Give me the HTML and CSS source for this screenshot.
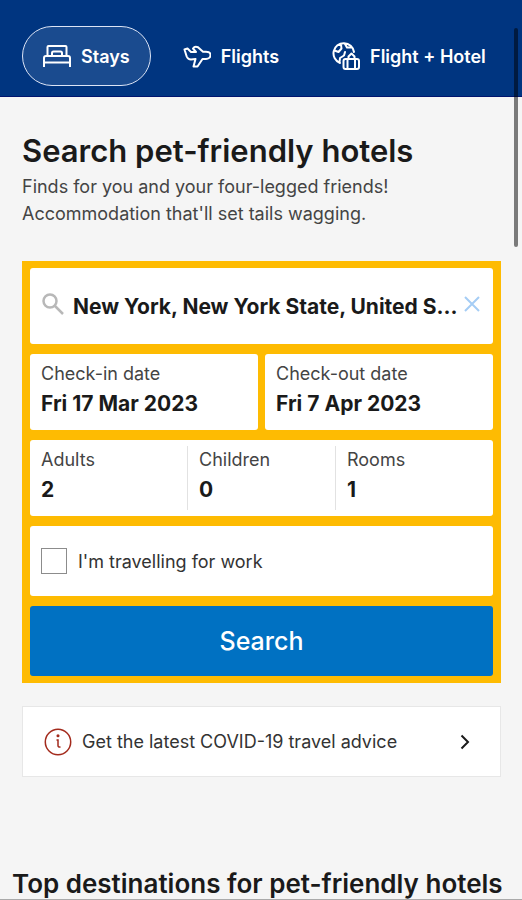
FILE: index.html
```html
<!DOCTYPE html>
<html lang="en-GB">
<head>
<meta charset="utf-8">
<meta name="viewport" content="width=device-width, initial-scale=1">
<title>Search pet-friendly hotels</title>
<link rel="stylesheet" href="styles.css">
</head>
<body>
<header class="header">
  <nav class="tabs">
    <a class="tab tab-active" href="#stays">
      <svg class="icon" viewBox="0 0 28 28" fill="none" stroke="currentColor" stroke-width="2" stroke-linejoin="round"><path d="M4.500 14V5a1 1 0 0 1 1-1h17a1 1 0 0 1 1 1v9M1 25V16a2 2 0 0 1 2-2h22a2 2 0 0 1 2 2v9M1 20.500h26M9 14v-3a1.500 1.500 0 0 1 1.500-1.500h7a1.500 1.500 0 0 1 1.500 1.500v3"/></svg>
      <span>Stays</span>
    </a>
    <a class="tab" href="#flights">
      <svg class="icon" viewBox="0 0 28 28" fill="none" stroke="currentColor" stroke-width="2" stroke-linejoin="round" stroke-linecap="round"><path d="M1.500 7.500L4.500 6.500 8 10h5L10 6.500c1-1.500 3-2 5-1.200l5 4.400h3c2.500 0 4.500 1.300 4.500 3.300 0 2.300-2 4-4.500 4h-3.500l-5 7.500h-4l2-7.500-4.500.5c-2.200 0-3.500-1-4.300-3z"/></svg>
      <span>Flights</span>
    </a>
    <a class="tab" href="#flight-hotel">
      <svg class="icon" viewBox="0 0 28 28" fill="none" stroke="currentColor" stroke-width="2" stroke-linejoin="round" stroke-linecap="round"><path d="M8 21A10.300 10.300 0 1 1 22 10M2.500 8.500l4 1.500 3-3.500-.5-4M13 2l2 3.500h4.500M7.500 20.500l.5-4.500 4-2.500 1-3.500"/><rect x="11.500" y="17" width="15.500" height="10" rx="2"/><path d="M16.500 17v-2.500l3-3 3 3V17M15.500 17v10M23 17v10"/></svg>
      <span>Flight + Hotel</span>
    </a>
  </nav>
</header>
<main class="page">
  <h1 class="title">Search pet-friendly hotels</h1>
  <p class="intro">Finds for you and your four-legged friends!<br>Accommodation that'll set tails wagging.</p>

  <form class="search">
    <div class="box destination">
      <svg class="lens" viewBox="0 0 22 22" fill="none" stroke="currentColor" stroke-width="2.500"><circle cx="8" cy="8" r="6.500"/><path d="M12.500 12.500l8.500 8.500"/></svg>
      <input class="place" type="text" aria-label="Destination" value="New York, New York State, United S...">
      <button class="clear" type="button" aria-label="Clear destination"><svg viewBox="0 0 16 16" fill="none" stroke="currentColor" stroke-width="2"><path d="M1 1l14 14M15 1L1 15"/></svg></button>
    </div>
    <div class="dates">
      <button class="box field" type="button"><span class="label">Check-in date</span><span class="value">Fri 17 Mar 2023</span></button>
      <button class="box field" type="button"><span class="label">Check-out date</span><span class="value">Fri 7 Apr 2023</span></button>
    </div>
    <div class="box guests">
      <button class="field" type="button"><span class="label">Adults</span><span class="value">2</span></button>
      <button class="field" type="button"><span class="label">Children</span><span class="value">0</span></button>
      <button class="field" type="button"><span class="label">Rooms</span><span class="value">1</span></button>
    </div>
    <label class="box work"><input class="check" type="checkbox"><span>I'm travelling for work</span></label>
    <button class="submit" type="submit">Search</button>
  </form>

  <a class="advice" href="#covid">
    <svg class="info" viewBox="0 0 28 28" fill="none" stroke="currentColor" stroke-width="1.500"><circle cx="14" cy="14" r="12.700"/><path d="M12.500 12h1.500v5.500q0 1.800 2.500 1.500"/><circle cx="14" cy="7.800" r=".8" fill="currentColor"/></svg>
    <span class="advice-text">Get the latest COVID-19 travel advice</span>
    <svg class="chevron" viewBox="0 0 10 16" fill="none" stroke="currentColor" stroke-width="2"><path d="M1.500 1.500L8 8l-6.500 6.500"/></svg>
  </a>
</main>
<section class="top">
  <h2 class="top-title">Top destinations for pet-friendly hotels</h2>
</section>
<div class="scroll-thumb"></div>
</body>
</html>
```
FILE: styles.css
```css
* { box-sizing: border-box; }
body {
  margin: 0;
  background: #f5f5f5;
  color: #1a1a1a;
  font-family: Inter, "Liberation Sans", sans-serif;
  font-size: 18px;
  line-height: 27px;
}
button, input { font: inherit; color: inherit; }
a { color: inherit; text-decoration: none; }
svg { display: block; flex: none; }

.header { background: #003580; padding: 26px 10px 10px 22px; border-bottom: 1px solid #00146e; }
.tabs { display: flex; gap: 11px; }
.tab {
  display: flex;
  align-items: center;
  gap: 10px;
  height: 60px;
  padding: 0 20px;
  border: 1px solid transparent;
  border-radius: 30px;
  color: #fff;
  font-weight: 600;
  white-space: nowrap;
}
.tab-active { background: #1a4b8f; border-color: #dce4f5; }
.icon { width: 28px; height: 28px; }

.page { padding: 36px 21px 0 22px; }
.title { margin: 0 0 4px; font-size: 31px; line-height: 36px; font-weight: 600; }
.intro { margin: 0 0 34px; color: #444; }

.search { display: flex; flex-direction: column; gap: 10px; padding: 7px 8px; background: #febb02; }
.box { background: #fff; border: 0; border-radius: 3px; }
.destination { display: flex; align-items: center; height: 76px; padding: 0 13px 0 12px; }
.lens, .clear { margin-bottom: 4px; }
.lens { width: 22px; height: 22px; color: #b8b8b8; }
.place {
  flex: 1;
  min-width: 0;
  margin-left: 9px;
  padding: 0;
  border: 0;
  outline: 0;
  background: none;
  font-size: 21px;
  font-weight: 700;
  text-overflow: ellipsis;
}
.clear { padding: 0; border: 0; background: none; color: #a5cdf5; }
.clear svg { width: 16px; height: 16px; }

.dates { display: grid; grid-template-columns: 1fr 1fr; gap: 7px; }
.field {
  display: flex;
  flex-direction: column;
  height: 76px;
  padding: 6px 11px;
  text-align: left;
}
.label { color: #444; }
.value { font-size: 21px; line-height: 34px; font-weight: 700; }
.guests { display: grid; grid-template-columns: 158fr 148fr 157fr; padding: 6px 0; }
.guests .field { height: 64px; padding: 0 11px; border: 0; background: none; }
.guests .field:not(:last-child) { border-right: 1px solid #e2e2e2; }
.work { display: flex; align-items: center; gap: 11px; height: 70px; padding: 0 11px; color: #333; }
.check { appearance: none; width: 26px; height: 26px; margin: 0; border: 1px solid #8c8c8c; background: #fff; }
.submit { height: 70px; border: 0; border-radius: 3px; background: #0071c2; color: #fff; font-size: 25px; font-weight: 500; }

.advice {
  display: flex;
  align-items: center;
  height: 71px;
  margin-top: 23px;
  padding: 0 30px 0 21px;
  border: 1px solid #e7e7e7;
  background: #fff;
  color: #333;
}
.info { width: 28px; height: 28px; color: #a32a1c; }
.advice-text { flex: 1; margin-left: 10px; }
.chevron { width: 10px; height: 16px; color: #1a1a1a; }

.top { margin-top: 92px; padding: 0 12px; border-bottom: 1px solid #aaa; }
.top-title { margin: 0; font-size: 26px; line-height: 30px; font-weight: 600; white-space: nowrap; }
.scroll-thumb { position: fixed; top: 28px; right: 4px; width: 4px; height: 219px; border-radius: 2px; background: rgba(0, 0, 0, .5); }
```
